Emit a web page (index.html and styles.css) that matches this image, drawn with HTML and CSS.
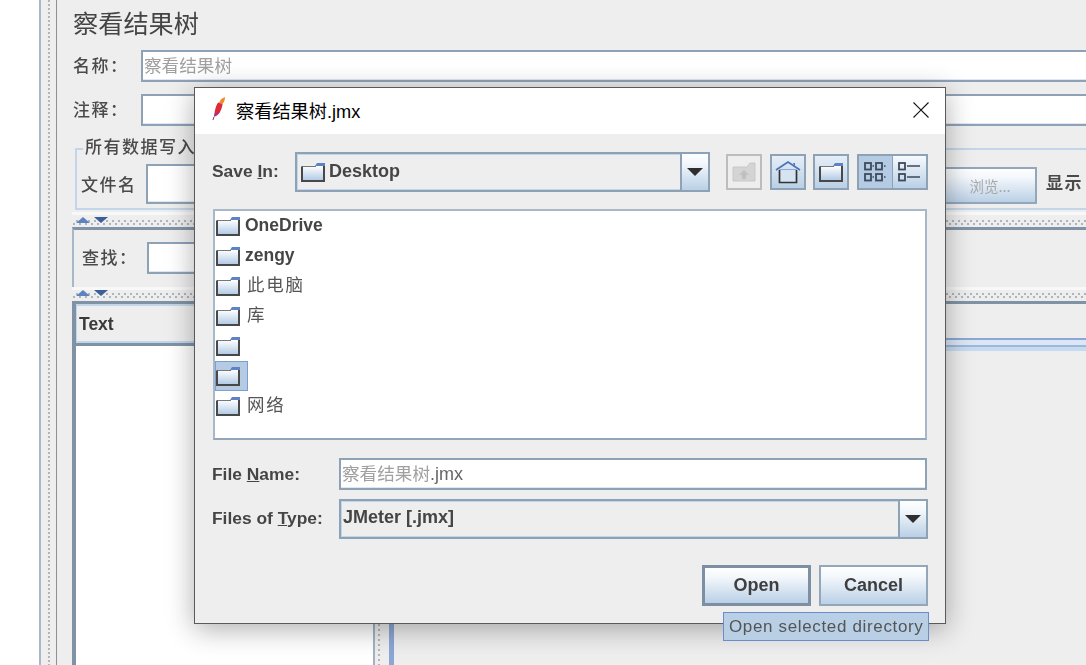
FILE: index.html
```html
<!DOCTYPE html>
<html lang="zh">
<head>
<meta charset="utf-8">
<title>察看结果树.jmx</title>
<link rel="stylesheet" href="styles.css">
</head>
<body>
<svg class="defs" width="0" height="0" aria-hidden="true">
  <defs>
    <linearGradient id="fg" x1="0" y1="0" x2="0" y2="1">
      <stop offset="0" stop-color="#ffffff"/>
      <stop offset="1" stop-color="#aec8e4"/>
    </linearGradient>
    <symbol id="folder" viewBox="0 0 24 20">
      <path d="M1 4.500H15L17 4H23V19H1Z" fill="url(#fg)"/>
      <path d="M1 4.500H15" stroke="#777" stroke-width="1" fill="none"/>
      <path d="M1 4.500V19H23V4" stroke="#484848" stroke-width="2" fill="none"/>
      <path d="M14 4L16 1H24V4Z" fill="#5f82c4"/>
    </symbol>
  </defs>
</svg>

<div class="app">
  <div class="side"></div>
  <div class="rail"></div>
  <main class="main">
    <h1 class="title">察看结果树</h1>
    <div class="row row-name">
      <span class="lab">名称：</span>
      <div class="field"><span class="ph">察看结果树</span></div>
    </div>
    <div class="row row-note">
      <span class="lab">注释：</span>
      <div class="field"></div>
    </div>
    <section class="group">
      <div class="legend">所有数据写入</div>
      <div class="group-row">
        <span class="lab lab-file">文件名</span>
        <div class="field field-file"></div>
        <div class="btn btn-browse">浏览...</div>
        <span class="show">显示</span>
      </div>
    </section>
    <div class="split split-a"><i class="up"></i><i class="down"></i></div>
    <div class="find">
      <span class="lab lab-find">查找：</span>
      <div class="field field-find"></div>
    </div>
    <div class="split split-b"><i class="up"></i><i class="down"></i></div>
    <div class="panes">
      <div class="tree">
        <div class="tree-head">Text</div>
        <div class="tree-body"></div>
      </div>
      <div class="pane-rail"></div>
      <div class="result">
        <div class="tabs"></div>
      </div>
    </div>
  </main>
</div>

<div class="dialog">
  <header class="bar">
    <svg class="logo" width="14" height="24" viewBox="0 0 14 24">
      <path d="M13 0C10 1 8 3 7 6L10.500 7C12 5 13 3 13 0Z" fill="#f08a2c"/>
      <path d="M6 5.500C4 9 3 12 2.500 16L7.500 16C9.500 12 10.500 9 10.500 7Z" fill="#dc2a3a"/>
      <path d="M2.500 16C2.200 17.500 2 18.500 1.800 20L5 18.500C6 17.500 7 16.500 7.500 16Z" fill="#a8327e"/>
      <path d="M1.800 20L1 23" stroke="#7a3a9a" stroke-width="1"/>
    </svg>
    <span class="bar-title">察看结果树.jmx</span>
    <svg class="close" width="16" height="16" viewBox="0 0 16 16">
      <path d="M.5 .5L15.500 15.500M15.500 .5L.5 15.500" stroke="#111" stroke-width="1.100" fill="none"/>
    </svg>
  </header>
  <div class="body">
    <div class="top">
      <span class="dlab dlab-save">Save <u>I</u>n:</span>
      <div class="combo combo-save">
        <div class="combo-val">
          <svg class="fi" width="24" height="20"><use href="#folder"/></svg>
          <b>Desktop</b>
        </div>
        <div class="arrow"><i></i></div>
      </div>
      <div class="tool tool-off">
        <svg width="24" height="20" viewBox="0 0 24 20">
          <path d="M1 5H15L18 1H23V19H1Z" fill="#d4d4d4" stroke="#c8c8c8"/>
          <path d="M12 8L7 13H10V17H14V13H17Z" fill="#c0c0c0"/>
        </svg>
      </div>
      <div class="tool">
        <svg width="26" height="24" viewBox="0 0 26 24">
          <path d="M1 10L13 2L25 10" fill="none" stroke="#4a72b8" stroke-width="1.600"/>
          <path d="M18 3H20V7Z" fill="#4a72b8"/>
          <path d="M4.500 10H21.500" stroke="#4a72b8" stroke-width="1"/>
          <path d="M4.500 10V22.500H21.500V10" fill="#d6e3f1" stroke="#333" stroke-width="1.700"/>
        </svg>
      </div>
      <div class="tool tool-new">
        <svg width="24" height="20"><use href="#folder"/></svg>
      </div>
      <div class="toggle">
        <div class="tg tg-on">
          <svg width="24" height="22" viewBox="0 0 24 22">
            <g fill="none" stroke="#3c4a5c" stroke-width="1.800">
              <rect x="1" y="2" width="6" height="6.500"/><rect x="12" y="2" width="6" height="6.500"/>
              <rect x="1" y="13" width="6" height="6.500"/><rect x="12" y="13" width="6" height="6.500"/>
            </g>
            <path d="M8.500 5H10M20 5H21.500M8.500 16H10M20 16H21.500" stroke="#3c4a5c" stroke-width="1.400"/>
          </svg>
        </div>
        <div class="tg tg-off">
          <svg width="24" height="22" viewBox="0 0 24 22">
            <g fill="none" stroke="#3c4a5c" stroke-width="1.800">
              <rect x="1" y="2" width="6" height="6.500"/><rect x="1" y="13" width="6" height="6.500"/>
            </g>
            <path d="M9 5H22M9 16H22" stroke="#3c4a5c" stroke-width="1.600"/>
          </svg>
        </div>
      </div>
    </div>

    <div class="list">
      <div class="item"><svg width="24" height="20"><use href="#folder"/></svg><b>OneDrive</b></div>
      <div class="item"><svg width="24" height="20"><use href="#folder"/></svg><b>zengy</b></div>
      <div class="item"><svg width="24" height="20"><use href="#folder"/></svg><span class="cjk">此电脑</span></div>
      <div class="item"><svg width="24" height="20"><use href="#folder"/></svg><span class="cjk">库</span></div>
      <div class="item"><svg width="24" height="20"><use href="#folder"/></svg></div>
      <div class="item item-sel"><svg width="24" height="20"><use href="#folder"/></svg></div>
      <div class="item"><svg width="24" height="20"><use href="#folder"/></svg><span class="cjk">网络</span></div>
    </div>

    <div class="line line-name">
      <span class="dlab dlab-wide dlab-name">File <u>N</u>ame:</span>
      <div class="field field-dlg"><span class="ph">察看结果树</span><span class="ph-ext">.jmx</span></div>
    </div>
    <div class="line line-type">
      <span class="dlab dlab-wide">Files of <u>T</u>ype:</span>
      <div class="combo combo-type">
        <div class="combo-val"><b>JMeter [.jmx]</b></div>
        <div class="arrow"><i></i></div>
      </div>
    </div>
    <div class="actions">
      <div class="btn btn-main">Open</div>
      <div class="btn">Cancel</div>
    </div>
  </div>
</div>

<div class="tip">Open selected directory</div>
</body>
</html>
```
FILE: styles.css
```css
* { box-sizing: border-box; }
html, body { margin: 0; height: 100%; overflow: hidden; }
body {
  background: #fff;
  font-family: "Liberation Sans", "Noto Sans CJK SC", sans-serif;
  color: #444;
  position: relative;
}
.defs { position: absolute; }

/* the screenshot is slightly upscaled, so everything is a little soft */
.app, .dialog, .tip { filter: blur(.4px); }

/* background window */
.app { display: flex; height: 665px; width: 1086px; overflow: hidden; }
.side { width: 39px; flex: none; background: #fff; }
.rail {
  width: 18px; flex: none;
  border-left: 2px solid #a9b8c8;
  border-right: 1px solid #8d9094;
  background-color: #eee;
  background-image: radial-gradient(circle at 1px 1px, #b5b5b5 1px, transparent 1.200px);
  background-size: 4px 4px;
  background-position: 7px 0;
  background-repeat: repeat-y;
}
.main {
  flex: 1; min-width: 0;
  display: flex; flex-direction: column;
  background: #eee;
  font-family: "Noto Sans CJK TC", sans-serif;
  color: #4a4a4a;
  overflow: hidden;
}
.title {
  margin: 0; height: 50px; padding: 4px 0 0 16px;
  font-family: "Noto Sans CJK SC", sans-serif;
  font-size: 25.200px; line-height: 36px; font-weight: 400; color: #444;
}
.row { display: flex; height: 32px; padding-left: 16px; margin-right: -4px; align-items: stretch; }
.row-note { margin-top: 12px; }
.lab { width: 68px; flex: none; font-size: 17px; letter-spacing: 1.500px; line-height: 30px; font-weight: 500; white-space: nowrap; }
.field {
  flex: 1; min-width: 0;
  background: #fff;
  border: 2px solid #8ea2b6;
  border-right-width: 1px;
  box-shadow: inset 0 -1px 0 #dfe8f1;
  padding-left: 1px;
}
.ph { color: #a0a0a0; font-size: 17.600px; line-height: 25px; font-family: "Noto Sans CJK SC", sans-serif; }

.group {
  margin: 22px 0 0 18px; height: 62px;
  border: 2px solid #c3d5e8; border-right: 0;
  position: relative;
  padding: 14px 3px 0 4px;
}
.legend {
  position: absolute; left: 6px; top: -16px;
  padding: 0 2px; background: #eee;
  font-size: 17px; letter-spacing: 1.500px; line-height: 24px; font-weight: 500; white-space: nowrap; color: #4a4a4a;
}
.group-row { display: flex; align-items: flex-start; }
.lab-file { width: 65px; line-height: 40px; }
.field-file { height: 40px; }
.btn {
  width: 109px; height: 41px;
  display: flex; align-items: center; justify-content: center;
  border: 2px solid #93a6ba;
  background: linear-gradient(#fdfeff 0, #f4f8fc 25%, #bad0e6 100%);
  font-family: "Liberation Sans", sans-serif;
  font-weight: 700; font-size: 18px; color: #3f3f3f;
}
.btn-browse {
  width: 94px; height: 37px; margin-top: 3px;
  font-family: "Noto Sans CJK SC", sans-serif;
  font-weight: 400; font-size: 14.500px; color: #a8a8a8;
}
.show { margin-left: 9px; font-size: 17px; letter-spacing: 1.500px; line-height: 36px; font-weight: 700; color: #4a4a4a; white-space: nowrap; }

.split {
  margin-left: 15px;
  border-top: 3px solid #f8f8f8;
  display: flex; align-items: flex-start; gap: 4px; padding-left: 4px;
  background-image:
    radial-gradient(circle at 1px 1px, #aeb4ba 1px, transparent 1.200px),
    radial-gradient(circle at 1px 1px, #aeb4ba 1px, transparent 1.200px);
  background-size: 6px 3px;
  background-repeat: repeat-x;
}
.split-a { height: 15px; margin-top: 2px; padding-top: 2px; background-position: 34px 5px, 37px 8px; }
.split-b { height: 14px; background-position: 34px 3px, 37px 6px; }
.split i { width: 0; height: 0; border-left: 7px solid transparent; border-right: 7px solid transparent; }
.split .up { border-bottom: 6px solid #5c82c0; }
.split .down { border-top: 6px solid #3c5f9c; }
.find {
  margin: 0 0 0 15px; height: 60px; flex: none;
  border-top: 3px solid #8093a6; border-left: 2px solid #a9b8c8;
  display: flex; padding: 12px 0 0 8px;
}
.lab-find { width: 65px; }
.field-find { height: 32px; flex: none; width: 300px; }

.panes { flex: 1; min-height: 0; display: flex; margin: 0 0 0 15px; border-top: 3px solid #8093a6; }
.tree {
  width: 303px; flex: none; display: flex; flex-direction: column;
  border-left: 4px solid #8093a6; border-right: 2px solid #a3b2c2;
}
.tree-head {
  height: 39px; background: #eee; border: 2px solid #c3d5e8; border-left-width: 1px;
  font-family: "Liberation Sans", sans-serif; font-weight: 700; font-size: 17.500px;
  line-height: 36px; padding-left: 2px; color: #3a3a3a;
}
.tree-body { flex: 1; background: #fff; border-top: 3px solid #8093a6; }
.pane-rail {
  width: 14px; flex: none; background-color: #eee;
  background-image: radial-gradient(circle at 1px 1px, #b5b5b5 1px, transparent 1.200px);
  background-size: 5px 5px; background-position: 3px 0; background-repeat: repeat-y;
}
.result { flex: 1; border-left: 5px solid #8ba7d6; }
.tabs {
  margin-top: 34px; height: 9px;
  border-top: 2px solid #8ba7d6;
  border-bottom: 2px solid #9cb8dd;
  background: #dbe7f4;
  box-shadow: 0 4px 0 #c7dbf0;
}

/* dialog */
.dialog {
  position: absolute; left: 194px; top: 87px; width: 752px; height: 537px;
  border: 1px solid #5a5a5a;
  background: #eee;
  box-shadow: 0 5px 26px rgba(0, 0, 0, .32);
  display: flex; flex-direction: column;
}
.bar {
  height: 46px; flex: none; background: #fff;
  display: flex; align-items: center; padding: 0 16px 0 17px;
}
.logo { margin-top: -4px; }
.bar-title {
  margin-left: 10px; flex: 1;
  font-size: 18.200px; color: #000;
  font-family: "Liberation Sans", "Noto Sans CJK SC", sans-serif;
  margin-top: -2px;
}
.close { margin-top: -2px; }
.body { flex: 1; padding: 18px 17px 0 17px; display: flex; flex-direction: column; }
.top { display: flex; height: 40px; align-items: center; }
.dlab { font-weight: 700; font-size: 17.400px; color: #454545; flex: none; white-space: nowrap; }
.dlab-save { width: 83px; padding-bottom: 2px; }
.dlab-wide { width: 127px; padding-bottom: 2px; }
.dlab-name { padding-bottom: 0; }
.combo {
  display: flex; align-items: stretch;
  border: 2px solid #8ea2b6;
  box-shadow: inset 0 0 0 1px #c3d5e8;
  background: #eee;
}
.combo-save { width: 415px; height: 40px; flex: none; }
.combo-val {
  flex: 1; display: flex; align-items: center; gap: 4px; padding-left: 4px;
  font-size: 18px; color: #454545;
}
.combo-val b { margin-top: -3px; }
.combo-save .combo-val b { margin-top: -1px; }
.arrow {
  width: 28px; flex: none;
  border-left: 2px solid #8ea2b6;
  background: linear-gradient(#fdfeff 0, #f4f8fc 25%, #bad0e6 100%);
  display: flex; align-items: center; justify-content: center;
}
.arrow i { width: 0; height: 0; border-left: 8px solid transparent; border-right: 8px solid transparent; border-top: 8px solid #2e2e2e; }
.tool {
  width: 36px; height: 36px; margin-left: 8px; flex: none;
  border: 2px solid #8ea2b6;
  background: linear-gradient(#e6eef7, #bad0e6);
  display: flex; align-items: center; justify-content: center;
}
.tool-off { margin-left: 16px; border-color: #bdbdbd; background: #eee; }
.tool-new { margin-left: 7px; }
.toggle { display: flex; margin-left: 8px; border: 2px solid #8ea2b6; height: 36px; flex: none; }
.tg {
  width: 34px;
  display: flex; align-items: center; justify-content: center;
  background: linear-gradient(#f7fafd, #bad0e6);
}
.tg-off { width: 33px; }
.tg-on { background: #b4cbe3; border-right: 1px solid #8ea2b6; }

.list {
  margin: 17px 0 0 1px; height: 231px; width: 714px;
  background: #fff;
  border: 2px solid #a9b8c8; border-bottom-color: #93a6ba;
  font-size: 17.500px;
}
.item { height: 30px; display: flex; align-items: center; gap: 5px; padding-left: 1px; color: #454545; }
.item svg { flex: none; }
.item b { margin-top: -2px; }
.cjk { font-family: "Noto Sans CJK SC", sans-serif; font-size: 17.500px; letter-spacing: 1.800px; margin: -6px 0 0 2px; color: #555; }
.item-sel {
  width: 33px; background: #b4cbe3;
  box-shadow: inset 0 0 0 1px #7d9ed2;
}

.line { display: flex; align-items: center; }
.line-name { margin-top: 18px; height: 32px; }
.line-type { margin-top: 9px; height: 40px; }
.field-dlg {
  height: 32px; margin-right: 1px;
  border-right-width: 2px;
  font-size: 17.500px; padding-left: 1px; line-height: 25px;
  white-space: nowrap;
}
.ph-ext { color: #666; font-size: 18px; font-family: "Liberation Sans", sans-serif; }
.combo-type { flex: 1; height: 40px; }
.combo-type .combo-val { padding-left: 2px; }
.actions { margin-top: 26px; display: flex; justify-content: flex-end; gap: 8px; }
.btn-main { border: 3px solid #7d90a3; }

/* tooltip */
.tip {
  position: absolute; left: 723px; top: 612px; width: 206px; height: 29px;
  background: #b8cfe6;
  border: 1px solid #6a8ccb;
  padding-left: 5px;
  font-size: 17px; line-height: 27px; letter-spacing: .65px; color: #555;
  white-space: nowrap; overflow: hidden;
}
```
